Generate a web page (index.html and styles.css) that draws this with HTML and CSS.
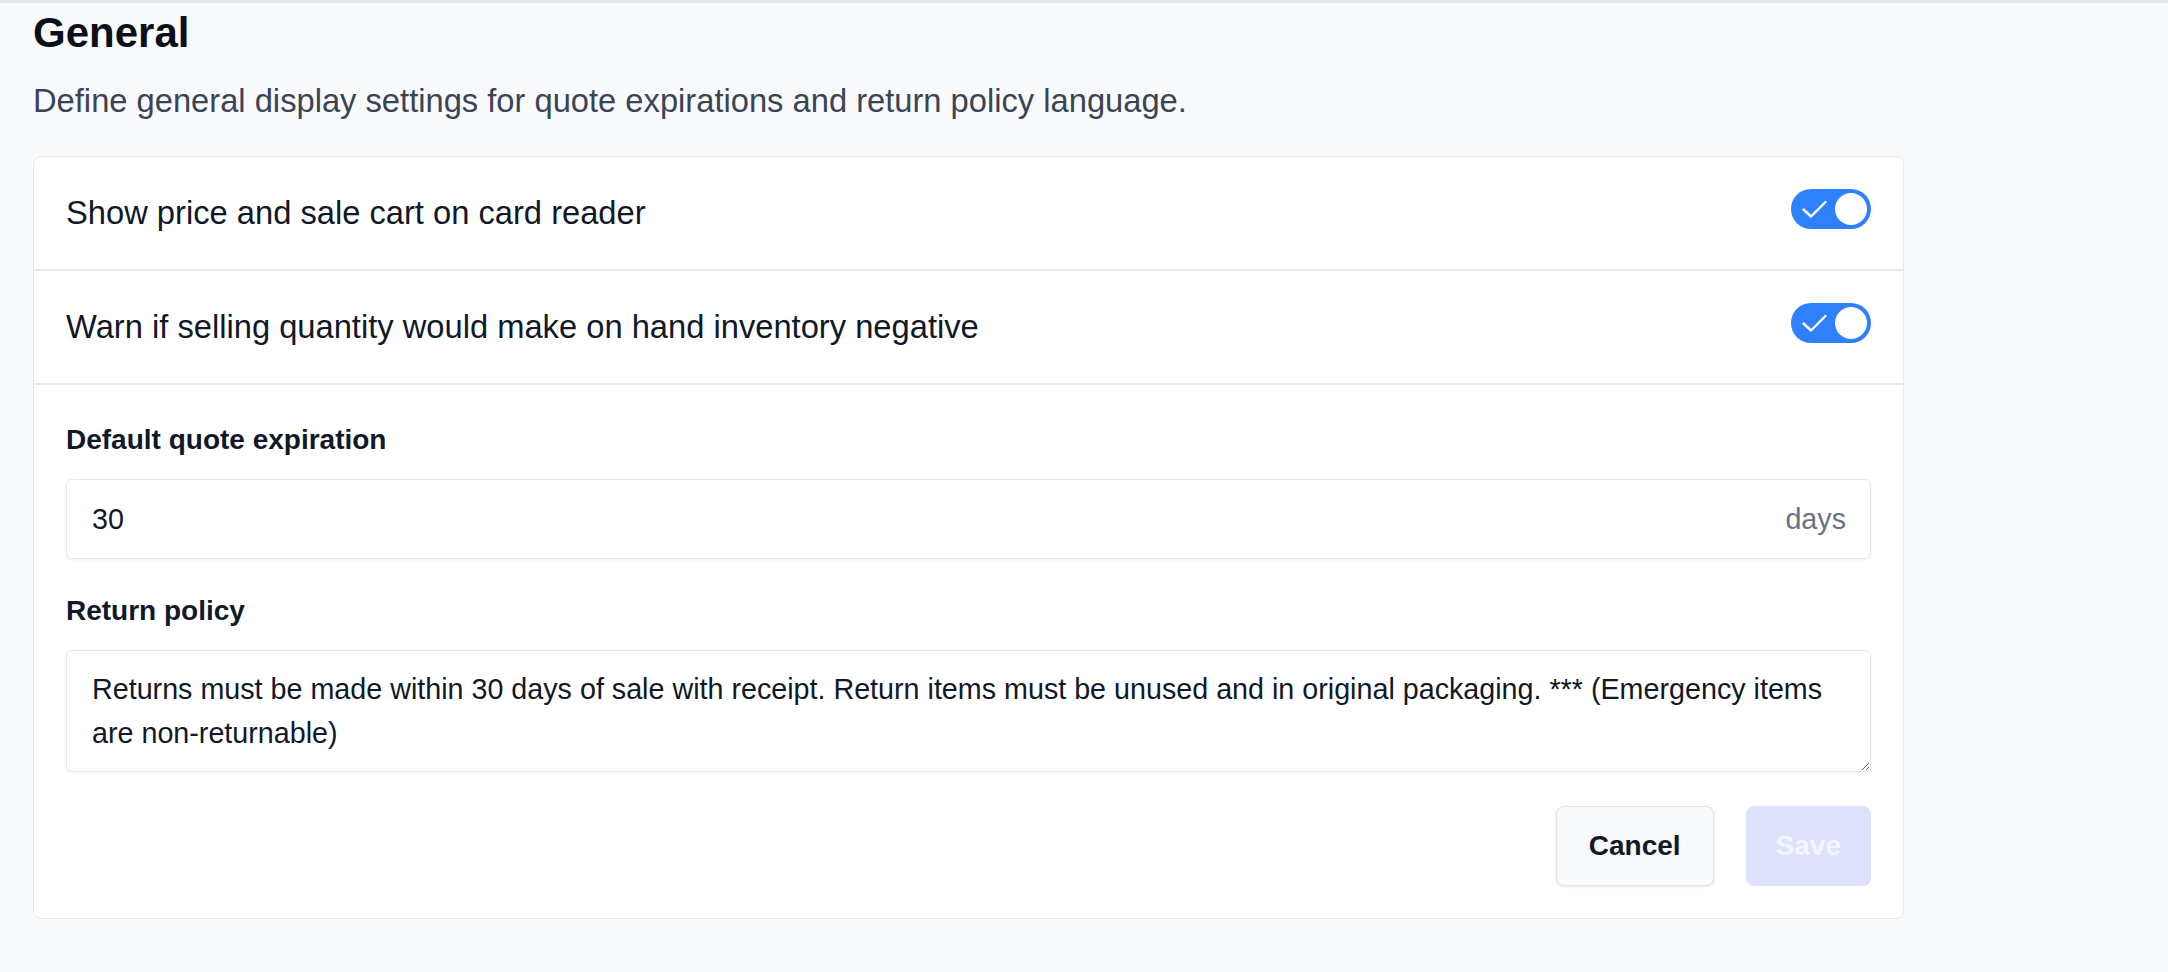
FILE: index.html
```html
<!DOCTYPE html>
<html>
<head>
	<meta charset="utf-8">
	<title>General settings</title>
	<link rel="stylesheet" href="styles.css">
</head>
<body>
	<div class="page">
		<h1 class="title">General</h1>
		<p class="subtitle">Define general display settings for quote expirations and return policy language.</p>

		<div class="card">
			<div class="row">
				<span>Show price and sale cart on card reader</span>
				<span class="toggle">
					<svg class="check" width="40" height="40" viewBox="0 0 40 40">
						<path d="M12.5 20.5 L20 27.5 L34.5 13" fill="none" stroke="#fff" stroke-width="2.4" stroke-linecap="round" stroke-linejoin="round"/>
					</svg>
					<span class="knob"></span>
				</span>
			</div>
			<div class="row">
				<span>Warn if selling quantity would make on hand inventory negative</span>
				<span class="toggle">
					<svg class="check" width="40" height="40" viewBox="0 0 40 40">
						<path d="M12.5 20.5 L20 27.5 L34.5 13" fill="none" stroke="#fff" stroke-width="2.4" stroke-linecap="round" stroke-linejoin="round"/>
					</svg>
					<span class="knob"></span>
				</span>
			</div>

			<div class="form">
				<label class="label">Default quote expiration</label>
				<div class="field">
					<input class="fieldInput" type="text" value="30">
					<span class="unit">days</span>
				</div>

				<label class="label second">Return policy</label>
				<textarea class="area">Returns must be made within 30 days of sale with receipt. Return items must be unused and in original packaging. *** (Emergency items are non-returnable)</textarea>

				<div class="actions">
					<button class="btn cancel">Cancel</button>
					<button class="btn save">Save</button>
				</div>
			</div>
		</div>
	</div>
</body>
</html>
```

FILE: styles.css
```css
*{
	margin: 0px;
	padding: 0px;
	box-sizing: border-box;
}
body{
	background-color: #f9fafb;
	font-family: "Liberation Sans", Arial, sans-serif;
	color: #111827;
	border-top: 3px solid #e5e7eb;
}
.page{
	width: 1904px;
	padding-left: 33px;
}
.title{
	margin-top: 4px;
	font-size: 42px;
	line-height: 52px;
	font-weight: bold;
	color: #0b0f19;
}
.subtitle{
	margin-top: 18px;
	font-size: 32.7px;
	line-height: 48px;
	color: #3b4455;
}
.card{
	margin-top: 31px;
	background-color: white;
	border: 1px solid #e5e7eb;
	border-radius: 8px;
}
.row{
	height: 114px;
	display: flex;
	align-items: center;
	justify-content: space-between;
	padding: 0 32px;
	font-size: 32.7px;
	line-height: 48px;
	border-bottom: 2px solid #e5e7eb;
}
.toggle{
	position: relative;
	width: 80px;
	height: 40px;
	margin-bottom: 8px;
	border-radius: 20px;
	background-color: #2f80fc;
}
.check{
	position: absolute;
	left: 0;
	top: 0;
}
.knob{
	position: absolute;
	right: 4px;
	top: 4px;
	width: 32px;
	height: 32px;
	border-radius: 50%;
	background-color: white;
}
.form{
	padding: 35px 32px 32px 32px;
	display: flex;
	flex-direction: column;
}
.label{
	font-size: 28px;
	line-height: 40px;
	font-weight: bold;
	color: #111827;
	margin-bottom: 19px;
}
.second{
	margin-top: 32px;
}
.field{
	height: 80px;
	display: flex;
	align-items: center;
	padding: 0 24px 0 25px;
	border: 1px solid #e5e7eb;
	border-radius: 6px;
	box-shadow: 0 1px 3px rgba(0,0,0,0.06);
}
.fieldInput{
	flex: 1;
	border: none;
	outline: none;
	font-family: inherit;
	font-size: 28.7px;
	color: #111827;
	background: transparent;
}
.unit{
	font-size: 28.7px;
	color: #6b7280;
}
.area{
	height: 122px;
	padding: 16px 30px 16px 25px;
	border: 1px solid #e5e7eb;
	border-radius: 6px;
	box-shadow: 0 1px 3px rgba(0,0,0,0.06);
	font-family: inherit;
	font-size: 28.7px;
	line-height: 44px;
	color: #111827;
	outline: none;
}
.actions{
	margin-top: 34px;
	display: flex;
	justify-content: flex-end;
	gap: 32px;
}
.btn{
	height: 80px;
	padding: 0 32px;
	border-radius: 8px;
	font-family: inherit;
	font-size: 28px;
	font-weight: bold;
}
.cancel{
	background-color: #f9fafb;
	color: #111827;
	border: 1px solid #e2e4e8;
	box-shadow: 0 1px 3px rgba(0,0,0,0.1);
}
.save{
	background-color: #dfe2fc;
	color: #f4f6ff;
	border: none;
	padding: 0 30px;
}
```
